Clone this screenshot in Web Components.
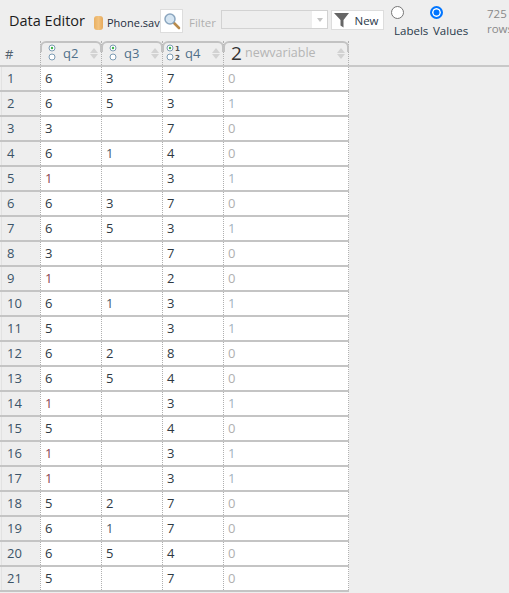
<!DOCTYPE html>
<html><head><meta charset="utf-8"><style>
html,body{margin:0;padding:0;height:593px;overflow:hidden;background:#eeeeee}
body{font-family:"Open Sans","Noto Sans",sans-serif}
</style></head><body>
<data-editor></data-editor>
<script>
const SCALE=`<svg width="10" height="17" viewBox="0 0 10 17"><circle cx="5" cy="4" r="3" fill="#fff" stroke="#7d9cb4"/><circle cx="5" cy="4" r="1.2" fill="#3cb54a"/><circle cx="5" cy="13" r="3" fill="#fff" stroke="#7d9cb4"/></svg>`;
const ORD=`<svg width="18" height="17" viewBox="0 0 18 17"><circle cx="4" cy="4" r="3" fill="#fff" stroke="#7d9cb4"/><circle cx="4" cy="4" r="1.2" fill="#3cb54a"/><circle cx="4" cy="13" r="3" fill="#fff" stroke="#7d9cb4"/><text x="9" y="7" font-family="DejaVu Sans" font-weight="700" font-size="7" fill="#555">1</text><text x="9" y="16" font-family="DejaVu Sans" font-weight="700" font-size="7" fill="#555">2</text></svg>`;
class ColHead extends HTMLElement{
  connectedCallback(){
    const s=this.attachShadow({mode:'open'});
    const k=this.getAttribute('kind');
    const icon=k==='ord'?ORD:k==='num'?'<span class="two">2</span>':SCALE;
    s.innerHTML=`<style>
    :host{display:flex;box-sizing:border-box;height:24px;align-items:center;border-left:1px dotted #b0b0b0;padding:0 2px 0 ${k==='ord'?'3px':k==='num'?'7px':'6px'};color:#50708a;font-size:13px;position:relative;margin-top:3px}
    :host(:last-child){border-right:1px dotted #b0b0b0}
    .cap{position:absolute;left:-1px;right:-1px;top:0;height:9px;border:2px solid #c2c2c2;border-bottom:0;border-radius:6px 6px 0 0;pointer-events:none}
    .i{display:flex;flex:none;width:${k==='ord'?'18px':k==='num'?'14px':'10px'};margin-top:-1px}
    .l{flex:1;margin-left:${k==='ord'?'1px':k==='num'?'0':'6px'};white-space:nowrap;margin-top:-1px;${k==='num'?'color:#b5b5b5;font-size:12.5px;':''}}
    .two{font-size:19px;color:#333;line-height:20px}
    .sort{flex:none;display:flex;flex-direction:column;gap:1px;margin-top:1px;margin-right:1px}
    .sort i{display:block;width:0;height:0;border:4px solid transparent;border-top:0;border-bottom:5px solid #d2d2d2}
    .sort i+i{border-bottom:0;border-top:5px solid #d2d2d2}
    </style><span class="cap"></span><span class="i">${icon}</span><span class="l"><slot></slot></span><span class="sort"><i></i><i></i></span>`;
  }
}
customElements.define('col-head',ColHead);
class DataGrid extends HTMLElement{
  connectedCallback(){
    const s=this.attachShadow({mode:'open'});
    const rows=[[6,3,7,0],[6,5,3,1],[3,'',7,0],[6,1,4,0],[1,'',3,1],[6,3,7,0],[6,5,3,1],[3,'',7,0],[1,'',2,0],[6,1,3,1],[5,'',3,1],[6,2,8,0],[6,5,4,0],[1,'',3,1],[5,'',4,0],[1,'',3,1],[1,'',3,1],[5,2,7,0],[6,1,7,0],[6,5,4,0],[5,'',7,0]];
    const cls=(v,c)=>c===3?(v===1?'n1':'n0'):(c===0&&v===1?'red':(v===1?'blue':''));
    const body=rows.map((r,i)=>`<div class="row"><div class="idx">${i+1}</div>${r.map((v,c)=>`<div class="cell ${cls(v,c)}">${v}</div>`).join('')}</div>`).join('');
    s.innerHTML=`<style>
    :host{display:block;font-size:13px;color:#2e3944}
    .head{display:grid;grid-template-columns:40px 61px 61px 61px 126px;height:27px;border-bottom:2px solid #c8c8c8;width:100%;box-sizing:content-box;grid-auto-rows:27px}
    .hash{font-size:13px;color:#50606e;padding:7px 0 0 5px}
    .row{display:grid;grid-template-columns:40px 61px 61px 61px 126px;height:25px;box-sizing:border-box;width:349px;border-bottom:2px solid #c4c4c4}
    .idx{color:#3b5468;padding-left:5px;line-height:23px;border-left:1px solid #e2e2e2;margin-left:1px}
    .cell{background:#fff;border-left:1px dotted #b0b0b0;padding-left:4px;line-height:23px;height:23px}
    .cell:last-child{border-right:1px dotted #b0b0b0}
    .red{color:#8a4450}.blue{color:#45596a}.n0{color:#b0b0b0}.n1{color:#a3b3bf}
    </style><div class="head"><div class="hash">#</div>
    <col-head kind="scale">q2</col-head><col-head kind="scale">q3</col-head><col-head kind="ord">q4</col-head><col-head kind="num">newvariable</col-head></div>${body}`;
  }
}
customElements.define('data-grid',DataGrid);
class EditorBar extends HTMLElement{
  connectedCallback(){
    const s=this.attachShadow({mode:'open'});
    s.innerHTML=`<style>
    :host{display:flex;height:38px;align-items:flex-start;color:#222;box-sizing:border-box;padding-left:9px;overflow:hidden;white-space:nowrap}
    .title{font-size:14.5px;margin-top:11px;color:#1c1c1c;width:85px;flex:none}
    .file{display:flex;align-items:center;flex:none;margin:15px 0 0 0;font-size:11px;width:66px;color:#1c2c3c}
    .cyl{width:9px;height:14px;background:linear-gradient(90deg,#e9b062,#f2c27e 50%,#e6aa5c);border-radius:3px;margin-right:4px;flex:none}
    .btn{background:#fff;border:1px solid #ddd;box-sizing:border-box;display:flex;align-items:center;justify-content:center;flex:none}
    .s{width:23px;height:24px;margin-top:9px}
    .f{font-size:11.5px;color:#b0b0b0;margin:15px 0 0 6px;width:32px;flex:none}
    .sel{width:107px;height:19px;margin-top:10px;flex:none;box-sizing:border-box;border:1px solid #d2d2d2;background:#eee;display:flex;justify-content:flex-end}
    .sel b{display:flex;width:15px;background:#fff;align-items:center;justify-content:center}
    .sel b::after{content:"";border:3px solid transparent;border-top:4px solid #c4c4c4;border-bottom:0}
    .new{margin:10px 0 0 3px;width:53px;height:20px;font-size:11.5px;gap:4px;color:#2a3a4a;padding-right:2px}
    .radio{flex:none;width:39px;font-size:11.5px;color:#28394a;height:38px}
    .o{display:block;width:13px;height:13px;box-sizing:border-box;border-radius:50%;border:1px solid #767676;background:#fff;margin-top:6px}
    .o.on{border:2px solid #0075ff;background:#0075ff;box-shadow:inset 0 0 0 1.5px #fff}
    .radio span{display:block;margin:4px 0 0 3px}
    .rows{font-size:11.5px;color:#8a8a8a;line-height:15px;margin:6px 0 0 18px;flex:none}
    </style>
    <div class="title">Data Editor</div>
    <div class="file"><span class="cyl"></span>Phone.sav</div>
    <div class="btn s"><svg width="18" height="18" viewBox="0 0 18 18"><path d="M10.5 10.5L16 16" stroke="#b98b4c" stroke-width="2.6" stroke-linecap="round"/><circle cx="7" cy="7" r="5" fill="#d5e5f2" stroke="#8ba6bf" stroke-width="1.5"/></svg></div>
    <div class="f">Filter</div>
    <div class="sel"><b></b></div>
    <div class="btn new"><svg width="16" height="16" viewBox="0 0 16 16"><path d="M0 1H15L9.5 8V15.5L6.5 13.5V8Z" fill="#666"/></svg>New</div>
    <div class="radio" style="margin-left:7px"><i class="o"></i><span>Labels</span></div>
    <div class="radio"><i class="o on"></i><span>Values</span></div>
    <div class="rows">725<br>rows</div>`;
  }
}
customElements.define('editor-bar',EditorBar);
class DataEditor extends HTMLElement{
  connectedCallback(){
    const s=this.attachShadow({mode:'open'});
    s.innerHTML=`<style>:host{display:block;width:509px;height:593px;overflow:hidden;background:#eee}</style><editor-bar></editor-bar><data-grid></data-grid>`;
  }
}
customElements.define('data-editor',DataEditor);
</script></body></html>
